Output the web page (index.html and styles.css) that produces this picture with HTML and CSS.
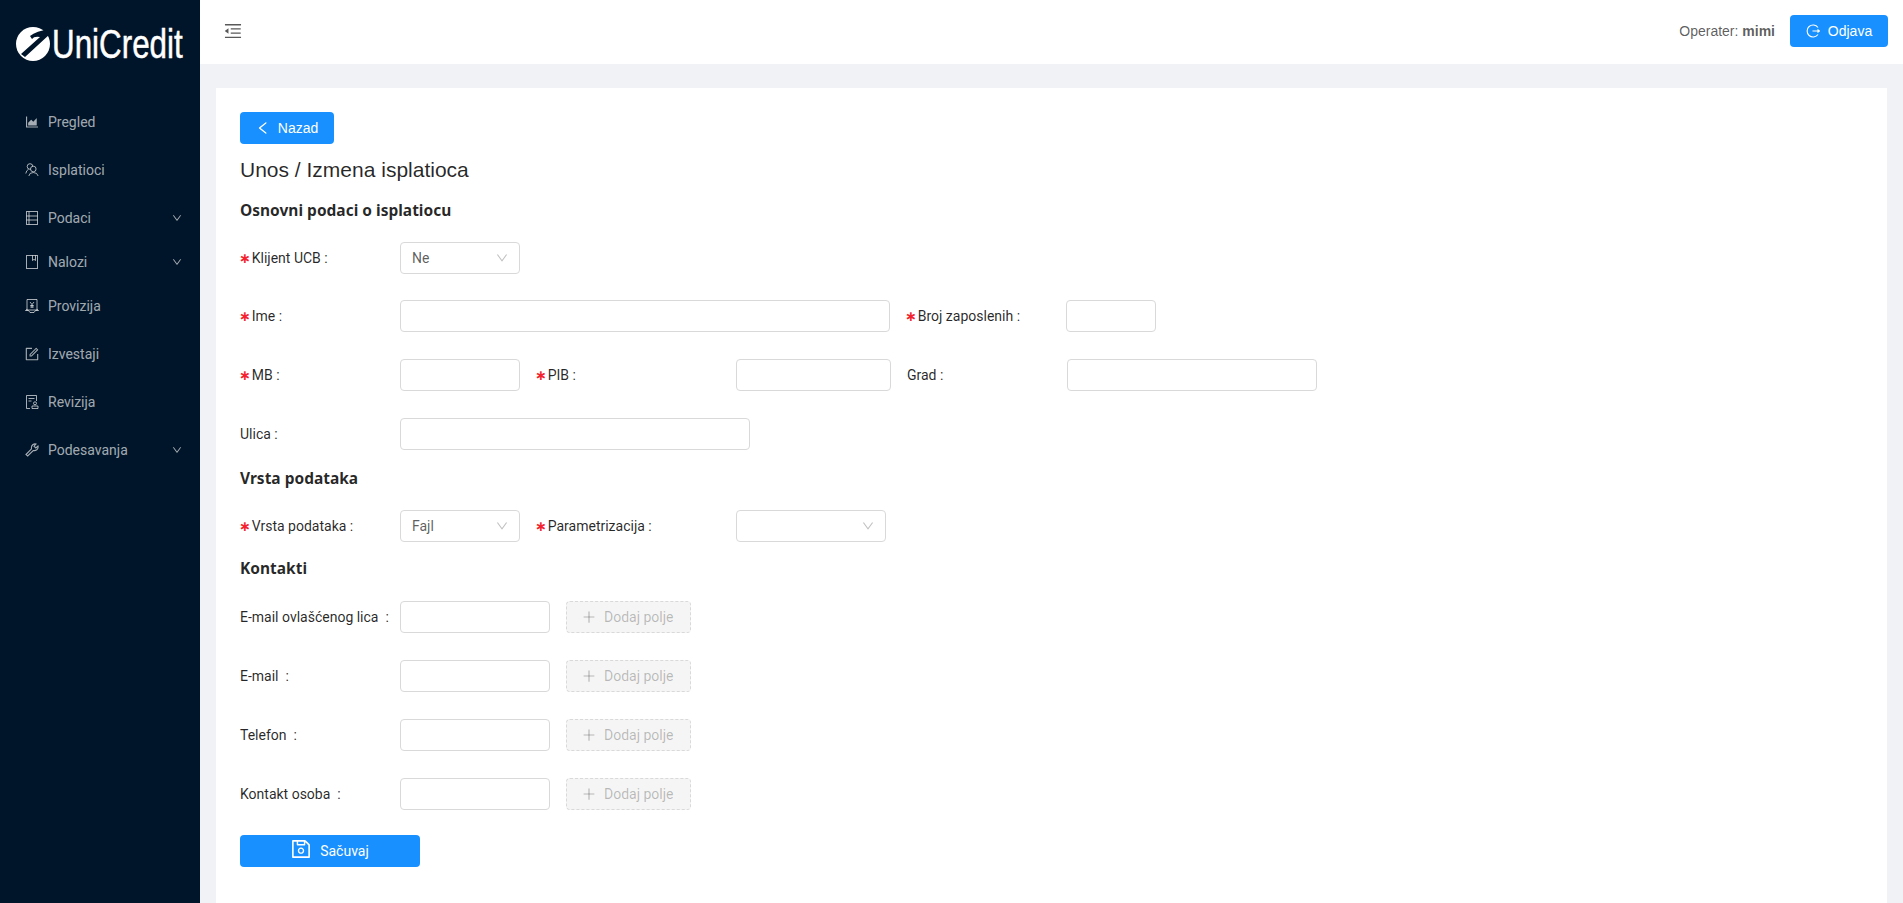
FILE: index.html
```html
<!DOCTYPE html>
<html lang="sr">
<head>
	<meta charset="utf-8">
	<meta name="viewport" content="width=device-width, initial-scale=1.0">
	<title>Unos / Izmena isplatioca</title>
	<link rel="stylesheet" href="styles.css">
</head>
<body>
<div class="layout">
	<aside class="sider">
		<div class="logo">
			<svg class="logo-mark" viewBox="0 0 34 36" aria-hidden="true">
				<circle cx="17" cy="18" r="17" fill="#fff"/>
				<path d="M14 10 Q20 5 34 3 L34 8 L9 31 L5 28 L24 11 Q18 10 16 13 Z" fill="#001529"/>
			</svg>
			<span class="logo-text">UniCredit</span>
		</div>
		<nav class="nav">
			<a class="nav-item">
				<svg class="nav-icon" viewBox="64 64 896 896"><path fill="currentColor" d="M888 792H200V168c0-4.400-3.600-8-8-8h-56c-4.400 0-8 3.600-8 8v688c0 4.400 3.600 8 8 8h752c4.400 0 8-3.600 8-8v-56c0-4.400-3.600-8-8-8zm-616-64h536c4.400 0 8-3.600 8-8V284c0-7.200-8.700-10.700-13.700-5.700L592 488.600l-125.400-124a8.030 8.030 0 0 0-11.300 0l-189 189.600a7.870 7.870 0 0 0-2.300 5.600V720c0 4.400 3.600 8 8 8z"/></svg>
				<span>Pregled</span>
			</a>
			<a class="nav-item">
				<svg class="nav-icon" viewBox="0 0 14 14" fill="none" stroke="currentColor" stroke-width="1"><circle cx="5" cy="3.500" r="2.800"/><circle cx="8.300" cy="6" r="2.800" fill="#001529"/><path d="M0.800 10.500 Q1.300 7.300 3.500 6.300M3.800 13 Q4.300 9.500 8.300 9.500 Q12.300 9.500 13.200 13"/></svg>
				<span>Isplatioci</span>
			</a>
			<a class="nav-item nav-sub">
				<svg class="nav-icon" viewBox="0 0 14 14" fill="none" stroke="currentColor" stroke-width="1"><rect x="1.500" y="0.500" width="11" height="13"/><path d="M1.500 5h11M1.500 9h11M4 0.500v13"/></svg>
				<span>Podaci</span>
				<svg class="nav-caret" viewBox="64 64 896 896"><path fill="currentColor" d="M884 256h-75c-5.100 0-9.900 2.500-12.900 6.600L512 654.200 227.900 262.600c-3-4.100-7.800-6.600-12.900-6.600h-75c-6.500 0-10.300 7.400-6.500 12.700l352.600 486.100c12.800 17.600 39 17.600 51.700 0l352.600-486.100c3.900-5.300.1-12.700-6.400-12.700z"/></svg>
			</a>
			<a class="nav-item nav-sub">
				<svg class="nav-icon" viewBox="0 0 14 14" fill="none" stroke="currentColor" stroke-width="1"><rect x="1.500" y="0.500" width="11" height="13"/><path d="M7.500 0.500v5l1.500-1.200 1.500 1.200v-5"/></svg>
				<span>Nalozi</span>
				<svg class="nav-caret" viewBox="64 64 896 896"><path fill="currentColor" d="M884 256h-75c-5.100 0-9.900 2.500-12.900 6.600L512 654.200 227.900 262.600c-3-4.100-7.800-6.600-12.900-6.600h-75c-6.500 0-10.300 7.400-6.500 12.700l352.600 486.100c12.800 17.600 39 17.600 51.700 0l352.600-486.100c3.900-5.300.1-12.700-6.400-12.700z"/></svg>
			</a>
			<a class="nav-item">
				<svg class="nav-icon" viewBox="0 0 14 14" fill="none" stroke="currentColor" stroke-width="1"><path d="M2 0.500h10v10.500H2zM0.500 11.500 Q2 11 2 10M13.500 11.500 Q12 11 12 10M0.500 11.500h3l1.500 2h4l1.500-2h3"/><path d="M5 3l2 2.500L9 3M7 5.500V9M5.200 6.500h3.600M5.200 8h3.600"/></svg>
				<span>Provizija</span>
			</a>
			<a class="nav-item">
				<svg class="nav-icon" viewBox="64 64 896 896"><path fill="currentColor" d="M904 512h-56c-4.400 0-8 3.600-8 8v320H184V184h320c4.400 0 8-3.600 8-8v-56c0-4.400-3.600-8-8-8H144c-17.700 0-32 14.300-32 32v736c0 17.700 14.300 32 32 32h736c17.700 0 32-14.300 32-32V520c0-4.400-3.600-8-8-8z"/><path fill="currentColor" d="M355.900 534.900L354 653.800c-.1 8.900 7.100 16.200 16 16.200h.4l118-2.900c2-.1 4-.9 5.400-2.300l415.900-415c3.100-3.100 3.100-8.200 0-11.300L785.400 114.300c-1.600-1.600-3.600-2.300-5.700-2.300s-4.100.8-5.700 2.300l-415.800 415a8.300 8.300 0 0 0-2.300 5.600zm63.500 23.600L779.700 199l45.200 45.100-360.500 359.700-45.700 1.100.7-46.400z"/></svg>
				<span>Izvestaji</span>
			</a>
			<a class="nav-item">
				<svg class="nav-icon" viewBox="0 0 14 14" fill="none" stroke="currentColor" stroke-width="1"><path d="M5 13.500H1.500V0.500h10V6"/><path d="M3.500 3.500h6M3.500 6h3"/><circle cx="10" cy="8.300" r="1.500"/><path d="M7 13.500v-2.500h6v2.500z"/></svg>
				<span>Revizija</span>
			</a>
			<a class="nav-item">
				<svg class="nav-icon" viewBox="0 0 14 14" fill="none" stroke="currentColor" stroke-width="1.100"><path d="M1 11.500 L6.500 5.800 Q6 3 8 1.500 Q9.500 0.500 11 1 L9 3.200 L10.800 5 L13 3 Q13.500 5 12 6.500 Q10.300 8 8.200 7.500 L2.700 13 Z"/></svg>
				<span>Podesavanja</span>
				<svg class="nav-caret" viewBox="64 64 896 896"><path fill="currentColor" d="M884 256h-75c-5.100 0-9.900 2.500-12.900 6.600L512 654.200 227.900 262.600c-3-4.100-7.800-6.600-12.900-6.600h-75c-6.500 0-10.300 7.400-6.500 12.700l352.600 486.100c12.800 17.600 39 17.600 51.700 0l352.600-486.100c3.900-5.300.1-12.700-6.400-12.700z"/></svg>
			</a>
		</nav>
	</aside>
	<div class="main">
		<header class="header">
			<svg class="trigger" viewBox="64 64 896 896"><path fill="currentColor" d="M408 442h480c4.400 0 8-3.600 8-8v-56c0-4.400-3.600-8-8-8H408c-4.400 0-8 3.600-8 8v56c0 4.400 3.600 8 8 8zm-8 204c0 4.400 3.600 8 8 8h480c4.400 0 8-3.600 8-8v-56c0-4.400-3.600-8-8-8H408c-4.400 0-8 3.600-8 8v56zm504-486H120c-4.400 0-8 3.600-8 8v56c0 4.400 3.600 8 8 8h784c4.400 0 8-3.600 8-8v-56c0-4.400-3.600-8-8-8zm0 632H120c-4.400 0-8 3.600-8 8v56c0 4.400 3.600 8 8 8h784c4.400 0 8-3.600 8-8v-56c0-4.400-3.600-8-8-8zM115.400 518.900L271.700 642c5.800 4.600 14.400.5 14.400-6.900V388.900c0-7.400-8.500-11.500-14.400-6.900L115.400 505.100a8.740 8.740 0 0 0 0 13.800z"/></svg>
			<div class="user">
				<span class="operater">Operater: <b>mimi</b></span>
				<button class="btn btn-logout" type="button">
					<svg class="btn-icon" viewBox="0 0 14 14" fill="none" stroke="currentColor" stroke-width="1.100"><path d="M12 3.500A6 6 0 1 0 12 10.500"/><path d="M6.500 7h7M11.500 5.500L13.300 7l-1.800 1.500"/></svg>
					Odjava
				</button>
			</div>
		</header>
		<main class="content">
			<div class="card">
				<button class="btn btn-back" type="button">
					<svg class="btn-icon" viewBox="64 64 896 896"><path fill="currentColor" d="M724 218.300V141c0-6.700-7.700-10.400-12.900-6.300L260.300 486.800a31.860 31.860 0 0 0 0 50.300l450.800 352.100c5.300 4.100 12.900.4 12.900-6.300v-77.300c0-4.900-2.300-9.600-6.100-12.600l-360-281 360-281.100c3.800-3 6.100-7.700 6.100-12.600z"/></svg>
					Nazad
				</button>
				<h1 class="title">Unos / Izmena isplatioca</h1>

				<h2 class="section section-first">Osnovni podaci o isplatiocu</h2>
				<div class="rows">
					<div class="row row-first">
						<label class="label req">Klijent UCB :</label>
						<div class="select w-120">Ne<svg class="select-arrow" viewBox="64 64 896 896"><path fill="currentColor" d="M884 256h-75c-5.100 0-9.900 2.500-12.900 6.600L512 654.200 227.900 262.600c-3-4.100-7.800-6.600-12.900-6.600h-75c-6.500 0-10.300 7.400-6.500 12.700l352.600 486.100c12.800 17.600 39 17.600 51.700 0l352.600-486.100c3.900-5.300.1-12.700-6.400-12.700z"/></svg></div>
					</div>
					<div class="row">
						<label class="label req">Ime :</label>
						<input class="input w-490" type="text">
						<label class="label req">Broj zaposlenih :</label>
						<input class="input w-90" type="text">
					</div>
					<div class="row">
						<label class="label req">MB :</label>
						<input class="input w-120" type="text">
						<label class="label label-wide req">PIB :</label>
						<input class="input w-155" type="text">
						<label class="label">Grad :</label>
						<input class="input w-250" type="text">
					</div>
					<div class="row">
						<label class="label">Ulica :</label>
						<input class="input w-350" type="text">
					</div>
				</div>

				<h2 class="section">Vrsta podataka</h2>
				<div class="rows">
					<div class="row">
						<label class="label req">Vrsta podataka :</label>
						<div class="select w-120">Fajl<svg class="select-arrow" viewBox="64 64 896 896"><path fill="currentColor" d="M884 256h-75c-5.100 0-9.900 2.500-12.900 6.600L512 654.200 227.900 262.600c-3-4.100-7.800-6.600-12.900-6.600h-75c-6.500 0-10.300 7.400-6.500 12.700l352.600 486.100c12.800 17.600 39 17.600 51.700 0l352.600-486.100c3.900-5.300.1-12.700-6.400-12.700z"/></svg></div>
						<label class="label label-wide req">Parametrizacija :</label>
						<div class="select w-150"><svg class="select-arrow" viewBox="64 64 896 896"><path fill="currentColor" d="M884 256h-75c-5.100 0-9.900 2.500-12.900 6.600L512 654.200 227.900 262.600c-3-4.100-7.800-6.600-12.900-6.600h-75c-6.500 0-10.300 7.400-6.500 12.700l352.600 486.100c12.800 17.600 39 17.600 51.700 0l352.600-486.100c3.900-5.300.1-12.700-6.400-12.700z"/></svg></div>
					</div>
				</div>

				<h2 class="section section-contact">Kontakti</h2>
				<div class="rows">
					<div class="row">
						<label class="label">E-mail ovlašćenog lica&nbsp; :</label>
						<input class="input w-150" type="text">
						<button class="btn-add" type="button" disabled><svg class="btn-icon" viewBox="64 64 896 896"><path fill="currentColor" d="M482 152h60q8 0 8 8v704q0 8-8 8h-60q-8 0-8-8V160q0-8 8-8z"/><path fill="currentColor" d="M176 474h672q8 0 8 8v60q0 8-8 8H176q-8 0-8-8v-60q0-8 8-8z"/></svg>Dodaj polje</button>
					</div>
					<div class="row">
						<label class="label">E-mail&nbsp; :</label>
						<input class="input w-150" type="text">
						<button class="btn-add" type="button" disabled><svg class="btn-icon" viewBox="64 64 896 896"><path fill="currentColor" d="M482 152h60q8 0 8 8v704q0 8-8 8h-60q-8 0-8-8V160q0-8 8-8z"/><path fill="currentColor" d="M176 474h672q8 0 8 8v60q0 8-8 8H176q-8 0-8-8v-60q0-8 8-8z"/></svg>Dodaj polje</button>
					</div>
					<div class="row">
						<label class="label">Telefon&nbsp; :</label>
						<input class="input w-150" type="text">
						<button class="btn-add" type="button" disabled><svg class="btn-icon" viewBox="64 64 896 896"><path fill="currentColor" d="M482 152h60q8 0 8 8v704q0 8-8 8h-60q-8 0-8-8V160q0-8 8-8z"/><path fill="currentColor" d="M176 474h672q8 0 8 8v60q0 8-8 8H176q-8 0-8-8v-60q0-8 8-8z"/></svg>Dodaj polje</button>
					</div>
					<div class="row">
						<label class="label">Kontakt osoba&nbsp; :</label>
						<input class="input w-150" type="text">
						<button class="btn-add" type="button" disabled><svg class="btn-icon" viewBox="64 64 896 896"><path fill="currentColor" d="M482 152h60q8 0 8 8v704q0 8-8 8h-60q-8 0-8-8V160q0-8 8-8z"/><path fill="currentColor" d="M176 474h672q8 0 8 8v60q0 8-8 8H176q-8 0-8-8v-60q0-8 8-8z"/></svg>Dodaj polje</button>
					</div>
				</div>

				<button class="btn btn-save" type="button">
					<svg class="save-icon" viewBox="64 64 896 896"><path fill="currentColor" d="M893.300 293.300L730.700 130.700c-7.500-7.500-16.700-13-26.700-16V112H144c-17.700 0-32 14.300-32 32v736c0 17.700 14.300 32 32 32h736c17.700 0 32-14.300 32-32V338.500c0-17-6.700-33.200-18.700-45.200zM384 184h256v104H384V184zm456 656H184V184h136v136c0 17.700 14.300 32 32 32h320c17.700 0 32-14.300 32-32V205.800l136 136V840zM512 442c-79.500 0-144 64.500-144 144s64.500 144 144 144 144-64.500 144-144-64.500-144-144-144zm0 224c-44.200 0-80-35.800-80-80s35.800-80 80-80 80 35.800 80 80-35.800 80-80 80z"/></svg>
					Sačuvaj
				</button>
			</div>
		</main>
	</div>
</div>
</body>
</html>
```

FILE: styles.css
```css
* { box-sizing: border-box; }
html, body { margin: 0; height: 100%; overflow: hidden; }
body { font: 14px/1.5 Roboto, sans-serif; color: rgba(0,0,0,.85); background: #f0f2f5; }

.layout { display: flex; height: 100vh; }

/* sidebar */
.sider { width: 200px; flex: none; background: #001529; color: rgba(255,255,255,.65); }
.logo { display: flex; align-items: center; gap: 2px; height: 102px; padding: 0 0 14px 16px; overflow: hidden; }
.logo-mark { width: 34px; height: 36px; flex: none; }
.logo-text { font: 41px/1 "Liberation Sans", sans-serif; color: #fff; transform: scaleX(.765); transform-origin: left center; -webkit-text-stroke: .5px #fff; }

.nav { display: flex; flex-direction: column; gap: 8px; }
.nav-item { display: flex; align-items: center; height: 40px; padding: 0 18px 0 25px; }
.nav-sub { margin-bottom: -4px; }
.nav-icon { width: 14px; height: 14px; flex: none; margin-right: 9px; }
.nav-caret { width: 10px; height: 10px; margin-left: auto; }

/* header */
.main { flex: 1; display: flex; flex-direction: column; min-width: 0; }
.header { display: flex; align-items: center; justify-content: space-between; height: 64px; padding: 0 15px 0 24px; background: #fff; flex: none; }
.trigger { width: 18px; height: 18px; color: #595959; margin-bottom: 3px; }
.user { display: flex; align-items: center; gap: 15px; margin-bottom: 2px; }
.operater { font-family: "Liberation Sans", sans-serif; color: rgba(0,0,0,.65); }

/* buttons */
.btn { display: flex; align-items: center; justify-content: center; height: 32px; border: 0; border-radius: 4px; background: #1890ff; color: #fff; font: 14px "Liberation Sans", sans-serif; }
.btn-icon { width: 14px; height: 14px; flex: none; margin-right: 8px; }
.btn-logout { width: 98px; }
.btn-back { width: 94px; }
.btn-save { width: 180px; margin-top: 25px; font-family: Roboto, sans-serif; }
.save-icon { width: 20px; height: 20px; margin-right: 9px; margin-bottom: 4px; }
.btn-add { display: flex; align-items: center; height: 32px; width: 125px; padding: 0 15px; border: 1px dashed #d9d9d9; border-radius: 4px; background: #f5f5f5; color: rgba(0,0,0,.25); font: 14px Roboto, sans-serif; white-space: nowrap; }

/* form */
.content { flex: 1; display: flex; padding: 24px 16px 0; min-height: 0; }
.card { flex: 1; padding: 24px; background: #fff; }
.title { margin: 12px 0 0; font: 400 21px/28px "Liberation Sans", sans-serif; }
.section { margin: 17px 0 21px; font: 700 15.5px/22px "Noto Sans", sans-serif; }
.section-first { margin-top: 15px; }
.section-contact { margin: 15px 0 22px; }
.rows { display: flex; flex-direction: column; gap: 27px; }
.row { display: flex; align-items: center; gap: 16px; }
.row-first { margin-bottom: -1px; }
.row .label + .input, .row .label + .select { margin-left: -16px; }
.label { width: 160px; flex: none; padding-top: 1px; white-space: nowrap; }
.label-wide { width: 200px; }
.req::before { content: "∗"; color: #f5222d; margin-right: 1px; font-family: "DejaVu Sans", sans-serif; font-weight: 700; font-size: 14px; margin-left: -1px; }

.input, .select { height: 32px; flex: none; border: 1px solid #d9d9d9; border-radius: 4px; background: #fff; }
.input { padding: 4px 11px; font: inherit; }
.select { display: flex; align-items: center; position: relative; padding: 1px 11px 0; color: rgba(0,0,0,.65); }
.select-arrow { width: 12px; height: 12px; position: absolute; right: 11px; top: 9px; color: rgba(0,0,0,.25); }

.w-90 { width: 90px; }
.w-120 { width: 120px; }
.w-150 { width: 150px; }
.w-155 { width: 155px; }
.w-250 { width: 250px; }
.w-350 { width: 350px; }
.w-490 { width: 490px; }
```
